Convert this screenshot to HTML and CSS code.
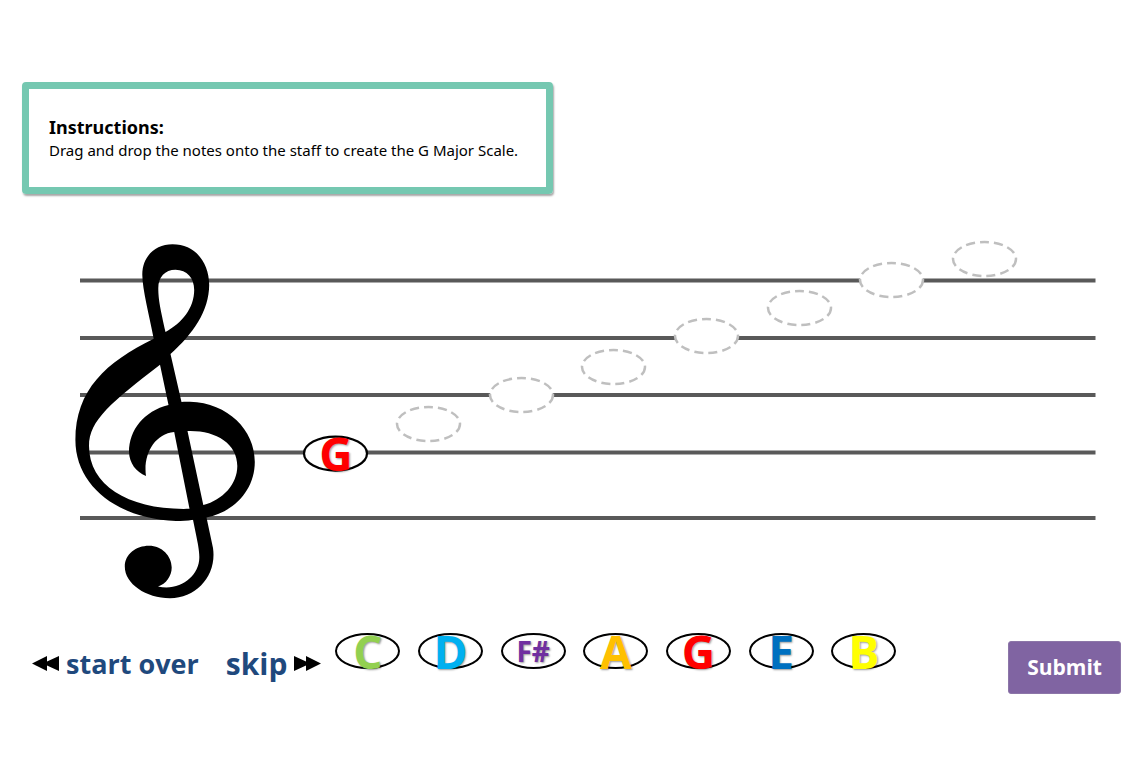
FILE: index.html
```html
<!DOCTYPE html>
<html lang="en">
<head>
<meta charset="utf-8">
<meta name="viewport" content="width=device-width, initial-scale=1">
<title>G Major Scale</title>
<link rel="stylesheet" href="styles.css">
</head>
<body>
<main class="activity">
  <section class="instructions">
    <h1 class="instructions-title">Instructions:</h1>
    <p class="instructions-text">Drag and drop the notes onto the staff to create the G Major Scale.</p>
  </section>

  <svg class="staff" viewBox="0 235 1139 370" role="img" aria-label="Treble staff with seven empty note positions">
    <path class="staff-lines" d="M80 280.5H1095.500M80 338H1095.500M80 395H1095.500M80 452.500H1095.500M80 518H1095.500"/>
    <path class="clef" fill-rule="evenodd" d="M153.700 338.700C149 314 142.500 290 142.300 275C142 257 155 244.300 172.500 244.300C195 244.300 209 262 209.200 285C209 311 193 334 170.500 354L181.500 402C184 401.600 187 401.600 190 401.800C228 403 254.800 430 254.800 462C254.800 490 234 512 206.500 517.500L213 548C217 575 197 598.300 170 598.300C146 598 124.800 584 124.800 566.500C124.800 554 136 545.700 149 545.700C162 545.700 171.700 556 171.700 567.500C171.700 576 166 584 158 586.500C180 591.500 199 576 199.300 558C199.500 551 197.500 542 196.500 537L193 519.800C187 521 182 521 176 521C118 519 75.400 486 75.400 440C75.400 390 106 362 153.700 338.700ZM165.500 332C160.500 309 158.300 300 158.300 288C158.300 277 165 269.700 175.500 269.700C187 269.700 194.200 278 194.200 290C194.200 308 182 323 165.500 332ZM160 364.800L168.500 405C144 411 129 430 129 452C129.300 463 136 472 146 476C143 455 154 434 174.200 432L189.500 508.800C130 510.500 89 486 89 446C89 420 112 402 160 364.800ZM187.500 431C215 430 237.300 443 237.300 466C237.300 484 223 500 203.300 505Z"/>
    <g class="slots">
      <ellipse cx="428.500" cy="424" rx="31.500" ry="17"/>
      <ellipse cx="521.500" cy="395" rx="31.500" ry="17"/>
      <ellipse cx="613.500" cy="367" rx="31.500" ry="17"/>
      <ellipse cx="706.500" cy="336" rx="31.500" ry="17"/>
      <ellipse cx="799.500" cy="308" rx="31.500" ry="17"/>
      <ellipse cx="891.500" cy="280" rx="31.500" ry="17"/>
      <ellipse cx="984.500" cy="259" rx="31.500" ry="17"/>
    </g>
    <ellipse class="placed" cx="335.500" cy="453.500" rx="31.500" ry="17"/>
    <text class="placed-label" x="336" y="471" text-anchor="middle">G</text>
  </svg>

  <div class="controls">
    <button class="nav start-over" type="button">
      <svg class="arrows" viewBox="0 0 27 15" aria-hidden="true"><path d="M0 7.500 15 0V5.500L27 0V15L15 9.500V15Z"/></svg>
      start over
    </button>
    <button class="nav skip" type="button">
      skip
      <svg class="arrows" viewBox="0 0 27 15" aria-hidden="true"><path d="M27 7.500 12 0V5.500L0 0V15L12 9.500V15Z"/></svg>
    </button>
    <div class="tray">
      <button class="note green" type="button" draggable="true">C</button>
      <button class="note cyan" type="button" draggable="true">D</button>
      <button class="note purple" type="button" draggable="true">F#</button>
      <button class="note orange" type="button" draggable="true">A</button>
      <button class="note red" type="button" draggable="true">G</button>
      <button class="note blue" type="button" draggable="true">E</button>
      <button class="note yellow" type="button" draggable="true">B</button>
    </div>
    <button class="submit" type="button">Submit</button>
  </div>
</main>
</body>
</html>
```
FILE: styles.css
```css
* {
  box-sizing: border-box;
}

body {
  margin: 0;
  background: #fff;
  color: #000;
  font-family: "Open Sans", "Noto Sans", sans-serif;
}

button {
  font-family: inherit;
  font-weight: 700;
  cursor: pointer;
}

.activity {
  padding-top: 82px;
}

.instructions {
  width: fit-content;
  margin-left: 22px;
  padding: 26px 28px 26px 20px;
  border: 7px solid #75c8b1;
  border-radius: 4px;
  box-shadow: 1px 2px 2px rgba(0, 0, 0, 0.35);
  font-family: "Noto Sans", "Open Sans", sans-serif;
}

.instructions-title {
  margin: 0;
  font-size: 18px;
  line-height: 24px;
}

.instructions-text {
  margin: 0;
  font-size: 15px;
  line-height: 22px;
}

.staff {
  display: block;
  width: 100%;
  margin-top: 41px;
}

.staff-lines {
  stroke: #595959;
  stroke-width: 4;
}

.slots {
  fill: #fff;
  stroke: #bfbfbf;
  stroke-width: 2.500;
  stroke-dasharray: 9 5;
}

.placed {
  fill: #fff;
  stroke: #000;
  stroke-width: 2.250;
}

.placed-label {
  fill: #f00;
  font-size: 46px;
  font-weight: 700;
  text-shadow: 1px 1px 2px rgba(0, 0, 0, 0.4);
}

.controls {
  display: flex;
  align-items: center;
  margin-top: 28px;
  padding: 0 18px 0 32px;
}

.nav {
  display: flex;
  align-items: center;
  gap: 7px;
  padding: 0 0 8px;
  border: 0;
  background: none;
  color: #1f497d;
  line-height: 40px;
  white-space: nowrap;
}

.start-over {
  font-size: 27px;
}

.skip {
  margin-left: 27px;
  font-size: 30px;
}

.arrows {
  flex: none;
  width: 27px;
  height: 15px;
}

.tray {
  display: flex;
  flex: 0 1 561px;
  justify-content: space-between;
  margin-left: 14px;
  padding-bottom: 33px;
}

.note {
  display: flex;
  align-items: center;
  justify-content: center;
  width: 65px;
  height: 36px;
  padding: 0;
  border: 2px solid #000;
  border-radius: 50%;
  background: #fff;
  font-size: 46px;
  line-height: 36px;
  text-shadow: 1px 1px 2px rgba(0, 0, 0, 0.4);
}

.green { color: #92d050; }
.cyan { color: #00b0f0; }
.purple { color: #7030a0; font-size: 28px; }
.orange { color: #ffc000; }
.red { color: #f00; }
.blue { color: #0070c0; }
.yellow { color: #ff0; }

.submit {
  margin-left: auto;
  padding: 0 18px;
  border: 1px solid #8c76a8;
  border-radius: 3px;
  background: #8064a2;
  color: #fff;
  font-size: 21px;
  line-height: 51px;
}
```
